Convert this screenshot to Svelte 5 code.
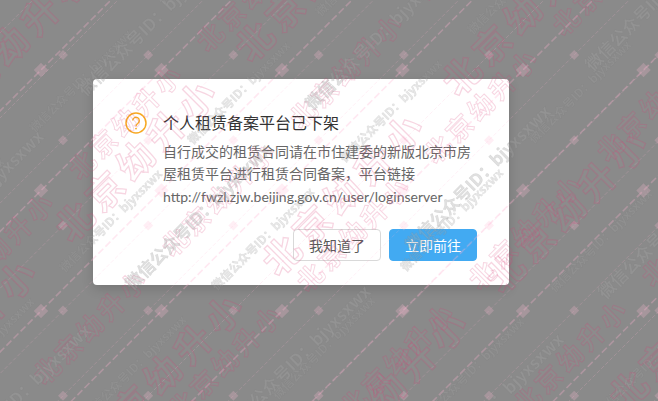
<script lang="ts">
  // watermark is two scaled copies of the same tile, laid over the whole page
  const PINK = '北京幼升小';
  const GRAY = '微信公众号ID：bjyxsxwx';

  const small = {
    cls: 'small',
    tile: 85.2,
    ox: 63,
    oy: 55,
    along: 128,
    mark: 1,
    pink: [[245, 125], [415, 90], [585, 225], [755, 525], [925, 570]],
    gray: [[160, 80], [330, 110], [500, 262], [670, 323], [840, 472], [1010, 520]]
  };
  const large = {
    cls: 'large',
    tile: 120.5,
    ox: 41,
    oy: 70,
    along: 180,
    mark: 1.45,
    pink: [[52, 10], [293, 136], [534, 163], [775, 207], [1016, 690]],
    gray: [[172, 150], [413, 377], [654, 297], [895, 490]]
  };

  function range(from: number, to: number, step: number) {
    const out: number[] = [];
    for (let v = from; v <= to; v += step) out.push(v);
    return out;
  }

  function texts(rows: number[][], along: number) {
    const out: { x: number; y: number }[] = [];
    for (const [sum, x0] of rows) {
      for (let k = -6; k <= 6; k++) {
        const x = x0 + k * along;
        const y = sum - x;
        if (x > -120 && x < 780 && y > -120 && y < 520) out.push({ x, y });
      }
    }
    return out;
  }

  function diamonds(l: typeof small) {
    const out: { x: number; y: number }[] = [];
    for (let i = -1; i * l.tile + l.ox < 680; i++) {
      for (let j = -1; j * l.tile + l.oy < 420; j++) {
        out.push({ x: l.ox + i * l.tile, y: l.oy + j * l.tile });
      }
    }
    return out;
  }

  function lines(l: typeof small) {
    return range(l.ox + l.oy - l.tile, 1100, l.tile);
  }
</script>

<div class="page">
  <div class="dialog">
    <div class="head">
      <svg class="icon" viewBox="0 0 22 22" width="22" height="22" aria-hidden="true">
        <circle cx="11" cy="11" r="10" fill="none" stroke="#f7a823" stroke-width="1.5" />
        <path d="M7.7 8.5a3.3 3.3 0 1 1 5.3 2.7c-1.2.9-2 1.5-2 3" fill="none" stroke="#f7a823" stroke-width="1.4" />
        <circle cx="11" cy="16.6" r="0.9" fill="#f7a823" />
      </svg>
      <span class="title">个人租赁备案平台已下架</span>
    </div>
    <p class="body">自行成交的租赁合同请在市住建委的新版北京市房屋租赁平台进行租赁合同备案，平台链接 http://fwzl.zjw.beijing.gov.cn/user/loginserver</p>
    <div class="actions">
      <button class="btn">我知道了</button>
      <button class="btn primary">立即前往</button>
    </div>
  </div>

  <svg class="watermark" width="658" height="401" viewBox="0 0 658 401" aria-hidden="true">
    {#each [small, large] as l}
      <g class={l.cls}>
        {#each lines(l) as sum}
          <line class="rule" x1={sum + 20} y1="-20" x2="-20" y2={sum + 20} />
        {/each}
        {#each diamonds(l) as d}
          <path class="mark" transform="translate({d.x} {d.y}) scale({l.mark})" d="M-5 0L-1.5-3.5L0-5L1.5-3.5L5 0L1.5 3.5L0 5L-1.5 3.5Z" />
        {/each}
        {#each texts(l.pink, l.along) as t}
          <text class="pink" x={t.x} y={t.y} transform="rotate(-45 {t.x} {t.y})">{PINK}</text>
        {/each}
        {#each texts(l.gray, l.along) as t}
          <text class="gray" x={t.x} y={t.y} transform="rotate(-45 {t.x} {t.y})">{GRAY}</text>
        {/each}
      </g>
    {/each}
  </svg>
</div>

<style>
  :global(body) {
    margin: 0;
    background: #8a8a8a;
  }

  .page {
    position: relative;
    width: 658px;
    height: 401px;
    box-sizing: border-box;
    padding: 79px 0 0 93px;
    overflow: hidden;
    font-family: Lato, "Noto Sans CJK SC", sans-serif;
  }

  .dialog {
    width: 416px;
    height: 206px;
    box-sizing: border-box;
    padding: 32px 32px 24px;
    background: #fff;
    border-radius: 4px;
    box-shadow: 0 4px 12px rgba(0, 0, 0, 0.15);
  }

  .head {
    display: flex;
    align-items: center;
    gap: 16px;
    height: 24px;
  }

  .icon {
    flex-shrink: 0;
  }

  .title {
    font-size: 16px;
    line-height: 24px;
    color: #333;
  }

  .body {
    margin: 6px 0 0 38px;
    font-size: 14px;
    line-height: 22.4px;
    color: #666;
  }

  .actions {
    display: flex;
    justify-content: flex-end;
    gap: 8px;
    margin-top: 21px;
  }

  .btn {
    width: 88px;
    height: 32px;
    padding: 0;
    border: 1px solid #d9d9d9;
    border-radius: 4px;
    background: #fff;
    color: #595959;
    font-family: inherit;
    font-size: 14px;
  }

  .primary {
    border-color: #42aaf2;
    background: #42aaf2;
    color: #fff;
  }

  .watermark {
    position: absolute;
    inset: 0;
    pointer-events: none;
    filter: blur(0.35px);
  }

  .rule {
    stroke: rgba(255, 180, 210, 0.2);
  }

  .small .rule {
    stroke-width: 1;
    stroke-dasharray: 4 2;
  }

  .large .rule {
    stroke-width: 1.6;
    stroke-dasharray: 7 3;
    stroke: rgba(255, 180, 210, 0.3);
  }

  .mark {
    fill: rgba(255, 190, 215, 0.24);
  }

  .pink,
  .gray {
    font-family: "Noto Sans CJK SC", sans-serif;
    font-weight: 700;
    text-anchor: middle;
    dominant-baseline: central;
  }

  .pink {
    fill: rgba(255, 255, 255, 0.02);
    stroke: rgba(215, 60, 120, 0.21);
  }

  .small .pink {
    font-size: 26px;
    letter-spacing: 4px;
    stroke-width: 1;
  }

  .large .pink {
    font-size: 37px;
    letter-spacing: 6px;
    stroke-width: 1.3;
  }

  .gray {
    fill: rgba(165, 165, 165, 0.34);
    stroke: rgba(110, 110, 110, 0.14);
    stroke-width: 0.5;
  }

  .small .gray {
    font-size: 12px;
    fill: rgba(165, 165, 165, 0.26);
  }

  .large .gray {
    font-size: 17px;
  }
</style>
